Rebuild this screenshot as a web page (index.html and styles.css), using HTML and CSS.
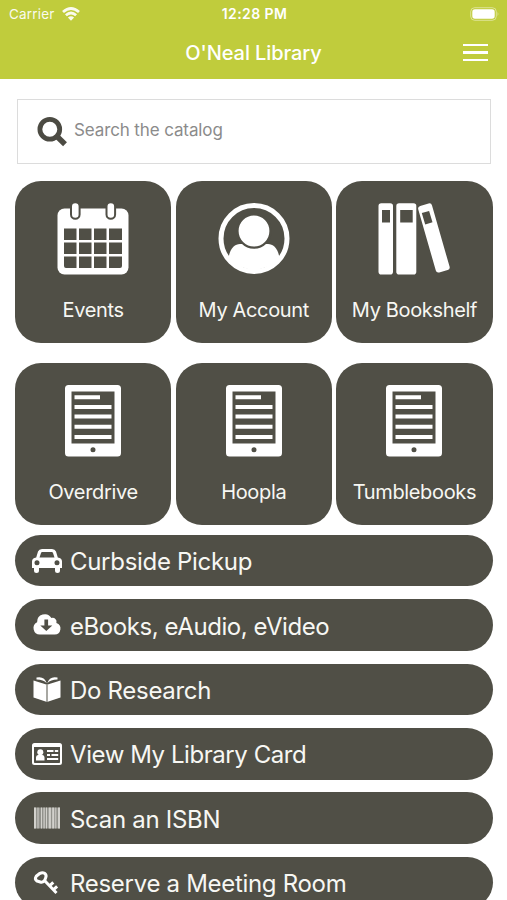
FILE: index.html
```html
<!DOCTYPE html>
<html lang="en">
<head>
    <meta charset="UTF-8">
    <meta name="viewport" content="width=device-width, initial-scale=1.0">
    <title>O'Neal Library</title>
    <link rel="stylesheet" href="styles.css">
</head>
<body>

    <!-- Shared tablet icon -->
    <svg class="symbols" width="0" height="0">
        <symbol id="tablet" viewBox="0 0 72 72">
            <path fill="#fff" fill-rule="evenodd" d="M11.500 0h49a3.500 3.500 0 0 1 3.500 3.500v64.500a3.500 3.500 0 0 1-3.500 3.500h-49a3.500 3.500 0 0 1-3.500-3.500v-64.500A3.500 3.500 0 0 1 11.500 0zM14.500 6.500v52h43v-52zM36 62.200a2.500 2.500 0 1 0 0 5a2.500 2.500 0 0 0 0-5z"/>
            <path fill="#fff" d="M17.500 10.300h25.500v4H17.500zM17.500 20h37v4H17.500zM17.500 29.600h37v4H17.500zM17.500 39.800h37v4H17.500zM17.500 50h37v4H17.500z"/>
        </symbol>
    </svg>

    <!-- Header -->
    <header class="header">
        <div class="status-bar">
            <div class="carrier">
                <span>Carrier</span>
                <svg class="wifi" viewBox="0 0 18 14" width="18" height="14">
                    <path fill="none" stroke="#fff" stroke-width="2.800" d="M1 5Q9-2 17 5M3.900 8.300Q9 3.800 14.100 8.300"/>
                    <path fill="#fff" d="M9 13.700L5.900 10.400Q9 7.900 12.100 10.400z"/>
                </svg>
            </div>
            <div class="time">12:28 PM</div>
            <svg class="battery" viewBox="0 0 30 14" width="30" height="14">
                <rect x=".7" y=".7" width="25.600" height="12.600" rx="4" fill="none" stroke="#fff" stroke-opacity=".45"/>
                <rect x="2.300" y="2.300" width="22.400" height="9.400" rx="2.600" fill="#fff"/>
                <path fill="#fff" fill-opacity=".5" d="M27.600 4.800q1.700 2.200 0 4.400z"/>
            </svg>
        </div>
        <div class="title-bar">
            <h1>O'Neal Library</h1>
            <div class="menu-btn"><span></span><span></span><span></span></div>
        </div>
    </header>

    <main class="content">
        <!-- Search -->
        <div class="search-box">
            <svg viewBox="0 0 30 30" width="30" height="30">
                <circle cx="12.800" cy="12.300" r="9.900" fill="none" stroke="#4c4b43" stroke-width="4.800"/>
                <path stroke="#4c4b43" stroke-width="5.600" d="M19.300 18.800L28 27.200"/>
            </svg>
            <span class="placeholder">Search the catalog</span>
        </div>

        <!-- Tiles -->
        <div class="tiles">
            <a class="tile">
                <svg viewBox="0 0 72 72" width="72" height="72">
                    <rect x=".5" y="5.500" width="71" height="66" rx="7" fill="#fff"/>
                    <g fill="#fff" stroke="#504f46" stroke-width="2">
                        <rect x="14" y="-.7" width="8.600" height="16.500" rx="4.300"/>
                        <rect x="49.500" y="-.7" width="8.600" height="16.500" rx="4.300"/>
                    </g>
                    <path fill="#504f46" d="M7 25.500h12.500v11.500H7zM22 25.500h12.500v11.500H22zM37 25.500h12.500v11.500H37zM52 25.500h13v11.500H52zM7 39.500h12.500v11.500H7zM22 39.500h12.500v11.500H22zM37 39.500h12.500v11.500H37zM52 39.500h13v11.500H52zM7 53.500h12.500v11.500H9q-2 0-2-2zM22 53.500h12.500v11.500H22zM37 53.500h12.500v11.500H37zM52 53.500h13v9.500q0 2-2 2H52z"/>
                </svg>
                <span>Events</span>
            </a>
            <a class="tile">
                <svg viewBox="0 0 72 72" width="72" height="72">
                    <circle cx="36" cy="35.500" r="33" fill="none" stroke="#fff" stroke-width="5"/>
                    <path fill="#fff" d="M10.500 55C12 45 17 41 22 41h28c5 0 10 4 11.500 14A34 34 0 0 1 10.500 55z"/>
                    <circle cx="36" cy="28" r="16.600" fill="#fff" stroke="#504f46" stroke-width="2.400"/>
                </svg>
                <span>My Account</span>
            </a>
            <a class="tile">
                <svg viewBox="0 0 72 72" width="72" height="72">
                    <g fill="#fff">
                        <rect x=".5" y=".3" width="14.500" height="71.200" rx="2.800"/>
                        <rect x="18.300" y=".3" width="20" height="71.200" rx="2.800"/>
                        <rect x="39.500" y="3.700" width="14.300" height="69.200" rx="2.800" transform="rotate(-16 39.500 3.700)"/>
                    </g>
                    <path fill="#504f46" d="M4 7h8v12.500H4zM22.200 7h12.500v12.500H22.200zM43.800 10l7.300-2.100l3.400 11.300l-7.300 2.200z"/>
                </svg>
                <span>My Bookshelf</span>
            </a>
            <a class="tile">
                <svg width="72" height="72"><use href="#tablet"/></svg>
                <span>Overdrive</span>
            </a>
            <a class="tile">
                <svg width="72" height="72"><use href="#tablet"/></svg>
                <span>Hoopla</span>
            </a>
            <a class="tile">
                <svg width="72" height="72"><use href="#tablet"/></svg>
                <span>Tumblebooks</span>
            </a>
        </div>

        <!-- Link list -->
        <nav class="links">
            <a class="link">
                <svg viewBox="0 0 30 26" width="30" height="26">
                    <path fill="#fff" fill-rule="evenodd" d="M4.200 9.500L6 3.500Q7 1 10 1h10q3 0 4 2.500l1.800 6Q30 10.200 30 13.500V20h-2v2.500a2.500 2.500 0 0 1-5 0V20H7v2.500a2.500 2.500 0 0 1-5 0V20H0v-6.500Q0 10.200 4.200 9.500zM7.500 9.500h15L21 4.900q-.3-.9-1.200-.9h-9.600q-.9 0-1.200.9zM5 12.300a2.500 2.500 0 1 0 0 5a2.500 2.500 0 0 0 0-5zM25 12.300a2.500 2.500 0 1 0 0 5a2.500 2.500 0 0 0 0-5z"/>
                </svg>
                <span>Curbside Pickup</span>
            </a>
            <a class="link tight">
                <svg viewBox="0 0 30 26" width="30" height="26">
                    <path fill="#fff" d="M7.800 22.500a6.500 6.500 0 0 1-2.700-12.300A7.700 7.700 0 0 1 19.400 6a4 4 0 0 1 5 5A5.900 5.900 0 0 1 22.700 22.500z"/>
                    <path fill="#504f46" d="M12.400 7.500h3.700v6h4.200L14.300 19l-6-5.500h4.100z"/>
                </svg>
                <span>eBooks, eAudio, eVideo</span>
            </a>
            <a class="link">
                <svg viewBox="0 0 30 26" width="30" height="26">
                    <path fill="#fff" d="M1.500 4.500l12.800 4v17.300L1.500 21.500zM28.500 4.500L15.700 8.500v17.300l12.800-4.300zM4.500 1.500q8-1.800 10.200 5.700q-3.500-3.800-10.200-3.700zM25.500 1.500q-8-1.800-10.200 5.700q3.500-3.800 10.200-3.700z"/>
                    <path stroke="#fff" stroke-width=".6" d="M15 8v18"/>
                </svg>
                <span>Do Research</span>
            </a>
            <a class="link tight">
                <svg viewBox="0 0 30 26" width="30" height="26">
                    <path fill="#fff" fill-rule="evenodd" d="M2.500 2h25Q30 2 30 4.500v17q0 2.500-2.500 2.500h-25Q0 24 0 21.500v-17Q0 2 2.500 2zM2 6v15.200q0 .8.800.8h24.400q.8 0 .8-.8V6z"/>
                    <path fill="#fff" d="M4 19.500v-3q0-2.500 2-2.500h4.500q2 0 2 2.500v3zM15 9h6.500v1.900H15zM22.800 9h3.400v1.900h-3.400zM15 13h3v1.900h-3zM19.500 13h6.700v1.900h-6.700zM15 17h11.200v1.900H15z"/>
                    <circle cx="8.300" cy="11.300" r="3" fill="#fff"/>
                </svg>
                <span>View My Library Card</span>
            </a>
            <a class="link">
                <svg viewBox="0 0 30 26" width="30" height="26">
                    <path fill="#fff" fill-opacity=".38" d="M2 2.500h26v21H2z"/>
                    <path fill="#e7e6e1" fill-opacity=".75" d="M2 2.500h2v21H2zM5.500 2.500h1v21h-1zM9 2.500h1v21H9zM11.500 2.500h1.200v21h-1.200zM14 2.500h1v21h-1zM16.700 2.500h2.200v21h-2.200zM20.200 2.500h2v21h-2zM23.300 2.500h1v21h-1zM26 2.500h2v21h-2z"/>
                </svg>
                <span>Scan an ISBN</span>
            </a>
            <a class="link">
                <svg viewBox="0 0 30 26" width="30" height="26">
                    <g fill="none" stroke="#fff" stroke-width="3" stroke-linejoin="round">
                        <path d="M8 3.300Q10.500 2 12.500 3.300Q14.800 5 13.800 7.500L12.800 10Q11 13 8.300 12L5 11Q2.300 9 4.200 6.300z"/>
                        <path d="M12.500 10.500L24.500 23M17.500 15.800l3.800-3.500M21.300 19.800l3.800-3.500"/>
                    </g>
                </svg>
                <span>Reserve a Meeting Room</span>
            </a>
        </nav>
    </main>

</body>
</html>
```
FILE: styles.css
```css
* {
    margin: 0;
    padding: 0;
    box-sizing: border-box;
}

body {
    height: 900px;
    overflow: hidden;
    background: #fff;
    font-family: Inter, "Liberation Sans", sans-serif;
}

.symbols {
    display: none;
}

/* Header */
.header {
    height: 79px;
    background: #c0cc3c;
    color: #fff;
}

.status-bar {
    display: grid;
    grid-template-columns: 1fr auto 1fr;
    align-items: center;
    height: 27px;
    padding: 0 7px 0 9px;
    font-size: 13.5px;
}

.carrier {
    display: flex;
    align-items: center;
    gap: 7px;
    letter-spacing: 0.2px;
    opacity: 0.92;
}

.time {
    font-size: 14px;
    font-weight: 600;
    letter-spacing: 0.4px;
}

.battery {
    justify-self: end;
}

.title-bar {
    display: grid;
    grid-template-columns: 1fr auto 1fr;
    align-items: center;
    height: 51px;
    padding: 0 19px;
}

.title-bar h1 {
    grid-column: 2;
    font-size: 20px;
    font-weight: 500;
    letter-spacing: -0.1px;
}

.menu-btn {
    display: flex;
    flex-direction: column;
    gap: 5px;
    justify-self: end;
    width: 25px;
}

.menu-btn span {
    height: 2.5px;
    background: #fff;
}

/* Search */
.content {
    padding: 20px 14.5px 0 15px;
}

.search-box {
    display: flex;
    align-items: center;
    gap: 7px;
    height: 65px;
    margin: 0 2px;
    padding: 0 19px;
    border: 1px solid #dcdcdc;
}

.placeholder {
    padding-bottom: 3px;
    color: #8b8b8b;
    font-size: 17px;
    letter-spacing: -0.12px;
}

/* Tiles */
.tiles {
    display: grid;
    grid-template-columns: repeat(3, 1fr);
    column-gap: 4.5px;
    row-gap: 20.5px;
    margin-top: 17.4px;
}

.tile {
    display: flex;
    flex-direction: column;
    align-items: center;
    height: 161.5px;
    padding-top: 22px;
    border-radius: 26px;
    background: #504f46;
    color: #f7f7f3;
}

.tile span {
    margin-top: 22.5px;
    font-size: 20px;
    line-height: 24px;
    letter-spacing: -0.35px;
    white-space: nowrap;
}

.tile svg {
    overflow: visible;
}

/* Link list */
.links {
    display: flex;
    flex-direction: column;
    gap: 12.9px;
    margin-top: 10px;
}

.link {
    display: flex;
    flex-shrink: 0;
    align-items: center;
    gap: 8.5px;
    height: 51.5px;
    padding: 0 16.5px;
    border-radius: 26px;
    background: #504f46;
    color: #f7f7f3;
    font-size: 24px;
    letter-spacing: -0.3px;
    white-space: nowrap;
}

.link span {
    padding-top: 2px;
}

.tight {
    letter-spacing: -0.43px;
}
```
